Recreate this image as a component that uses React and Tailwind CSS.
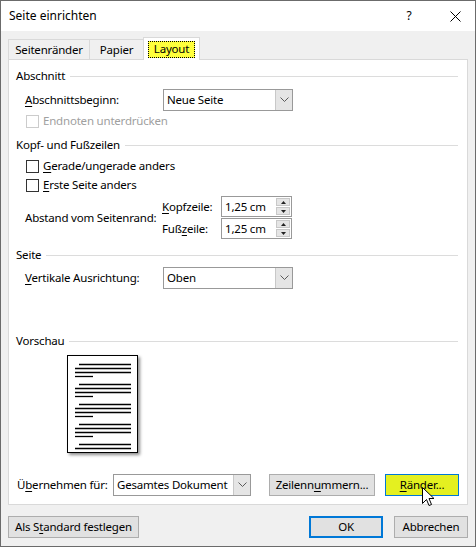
import React from "react";

// mnemonic letter (underlined access key)
const Mn = ({ children }) => (
  <span className="underline underline-offset-[2px] decoration-1">{children}</span>
);

function SectionHeader({ title, className = "" }) {
  return (
    <div className={`flex items-center h-4 pl-[7px] pr-[9px] ${className}`}>
      <span>{title}</span>
      <div className="flex-1 ml-[5px] h-px bg-[#dcdcdc]" />
    </div>
  );
}

function Chevron() {
  return (
    <svg width="9" height="6" viewBox="0 0 9 6">
      <path d="M0.5 0.5 L4.5 4.5 L8.5 0.5" fill="none" stroke="#5a5a5a" strokeWidth="1" />
    </svg>
  );
}

function Select({ value, className = "" }) {
  return (
    <div className={`flex h-[22px] border border-[#999999] bg-white ${className}`}>
      <div className="flex-1 flex items-center pl-[3px]">{value}</div>
      <div className="w-[17px] flex items-center justify-center bg-[#e5e5e5] border-l border-[#c8c8c8]">
        <Chevron />
      </div>
    </div>
  );
}

function Spinner({ value }) {
  return (
    <div className="flex h-[21px] w-[71px] border border-[#999999] bg-white">
      <div className="flex-1 flex items-center pl-[3px]">{value}</div>
      <div className="w-[14px] flex flex-col my-[1px] mr-[1px] gap-[1px]">
        <div className="flex-1 bg-[#e5e5e5] border border-[#c8c8c8] flex items-center justify-center">
          <svg width="5" height="3" viewBox="0 0 5 3">
            <path d="M0 3 L2.5 0 L5 3Z" fill="#222" />
          </svg>
        </div>
        <div className="flex-1 bg-[#e5e5e5] border border-[#c8c8c8] flex items-center justify-center">
          <svg width="5" height="3" viewBox="0 0 5 3">
            <path d="M0 0 L2.5 3 L5 0Z" fill="#222" />
          </svg>
        </div>
      </div>
    </div>
  );
}

function Checkbox({ children, disabled = false, className = "" }) {
  return (
    <div className={`flex items-center h-4 pl-[17px] ${className}`}>
      <div
        className={`w-[13px] h-[13px] bg-white border ${
          disabled ? "border-[#cccccc]" : "border-[#333333]"
        }`}
      />
      <span className={`ml-[4px] ${disabled ? "text-[#a0a0a0]" : ""}`}>{children}</span>
    </div>
  );
}

function Button({ children, className = "" }) {
  return (
    <div
      className={`h-[22px] flex items-center justify-center bg-[#e1e1e1] border border-[#adadad] ${className}`}
    >
      {children}
    </div>
  );
}

function PagePreview() {
  const groups = [0, 20, 40, 60, 80];
  return (
    <div className="w-[71px] h-[98px] bg-white border border-black shadow-[2px_2px_3px_rgba(0,0,0,0.45)]">
      <svg width="69" height="96" viewBox="0 0 69 96">
        {groups.map((g, i) => (
          <g key={i} stroke="#000" strokeWidth="1.3">
            <line x1="11" x2="63" y1={8.5 + g} y2={8.5 + g} />
            <line x1="7" x2="63" y1={12.5 + g} y2={12.5 + g} />
            {i < 4 && <line x1="7" x2="63" y1={16.5 + g} y2={16.5 + g} />}
            {i < 4 && <line x1="7" x2="25" y1={20.5 + g} y2={20.5 + g} />}
          </g>
        ))}
      </svg>
    </div>
  );
}

export default function App() {
  return (
    <div className="w-[476px] h-[547px] flex flex-col border border-[#6b6b6b] bg-[#f0f0f0] text-[11.5px] tracking-[-0.2px] leading-4 whitespace-nowrap text-black font-['Noto_Sans',sans-serif] relative">
      {/* title bar */}
      <div className="h-[30px] bg-white flex items-center pl-2 shrink-0 text-[12px] tracking-normal">
        <span className="flex-1">Seite einrichten</span>
        <span className="w-[30px] text-center mr-[14px]">?</span>
        <div className="w-[34px] flex justify-center mr-[3px]">
          <svg width="11" height="11" viewBox="0 0 11 11">
            <path d="M0.5 0.5 L10.5 10.5 M10.5 0.5 L0.5 10.5" stroke="#000" strokeWidth="1" />
          </svg>
        </div>
      </div>

      <div className="flex-1 flex flex-col px-[7px]">
        {/* tabs */}
        <div className="flex items-end mt-[6px]">
          <div className="w-[82px] h-[20px] flex items-center justify-center border border-b-0 border-[#d9d9d9]">
            Seitenränder
          </div>
          <div className="w-[54px] h-[20px] flex items-center justify-center border border-b-0 border-l-0 border-[#d9d9d9]">
            Papier
          </div>
          <div className="w-[57px] h-[23px] -ml-px -mb-px relative z-10 bg-white border border-b-0 border-[#d9d9d9] flex items-center justify-center">
            <span className="h-[17px] px-[5px] flex items-center bg-[#ffff3c] border border-dotted border-black">
              Layout
            </span>
          </div>
        </div>

        {/* tab panel */}
        <div className="h-[446px] bg-white border border-[#d9d9d9] flex flex-col">
          <SectionHeader title="Abschnitt" className="mt-2" />
          <div className="flex items-center mt-[5px] pl-4">
            <span className="w-[138px]">
              <Mn>A</Mn>bschnittsbeginn:
            </span>
            <Select value="Neue Seite" className="w-[130px]" />
          </div>
          <Checkbox disabled className="mt-[2px]">
            Endnoten unterdrücken
          </Checkbox>

          <SectionHeader title="Kopf- und Fußzeilen" className="mt-2" />
          <Checkbox className="mt-[5px]">
            <Mn>G</Mn>erade/ungerade anders
          </Checkbox>
          <Checkbox className="mt-[3px]">
            <Mn>E</Mn>rste Seite anders
          </Checkbox>
          <div className="flex items-center mt-[3px] pl-4">
            <span className="w-[137px]">Abstand vom Seitenrand:</span>
            <div className="flex flex-col gap-[1px]">
              <div className="flex items-center">
                <span className="w-[59px]">
                  <Mn>K</Mn>opfzeile:
                </span>
                <Spinner value="1,25 cm" />
              </div>
              <div className="flex items-center">
                <span className="w-[59px]">
                  Fuß<Mn>z</Mn>eile:
                </span>
                <Spinner value="1,25 cm" />
              </div>
            </div>
          </div>

          <SectionHeader title="Seite" className="mt-2" />
          <div className="flex items-center mt-1 pl-4">
            <span className="w-[138px]">
              <Mn>V</Mn>ertikale Ausrichtung:
            </span>
            <Select value="Oben" className="w-[130px]" />
          </div>

          <SectionHeader title="Vorschau" className="mt-[44px]" />
          <div className="mt-[6px] pl-[58px]">
            <PagePreview />
          </div>

          <div className="flex items-center mt-[21px] pl-2">
            <span className="w-[96px]">
              Ü<Mn>b</Mn>ernehmen für:
            </span>
            <Select value="Gesamtes Dokument" className="w-[138px]" />
            <Button className="w-[106px] ml-[18px]">
              Zeilenn<Mn>u</Mn>mmern...
            </Button>
            <div className="w-[74px] ml-[10px] h-[22px] flex items-center justify-center bg-[#e4f020] border border-[#0078d7]">
              <span>
                <Mn>R</Mn>änder...
              </span>
            </div>
          </div>
        </div>

        {/* bottom buttons */}
        <div className="flex items-center mt-[11px]">
          <Button className="w-[131px]">
            Als S<Mn>t</Mn>andard festlegen
          </Button>
          <div className="flex-1" />
          <div className="w-[74px] h-[22px] flex items-center justify-center bg-[#e1e1e1] border-2 border-[#0078d7]">
            OK
          </div>
          <Button className="w-[74px] ml-[11px]">Abbrechen</Button>
        </div>
      </div>

      {/* mouse cursor */}
      <svg
        className="absolute left-[421px] top-[486px]"
        width="13"
        height="21"
        viewBox="0 0 13 21"
      >
        <path
          d="M0.5 0.5 L0.5 16.5 L4.5 12.5 L7 18.5 L9.5 17.5 L7 11.5 L12 11.5 Z"
          fill="#fff"
          stroke="#000"
          strokeWidth="1"
          strokeLinejoin="round"
        />
      </svg>
    </div>
  );
}
